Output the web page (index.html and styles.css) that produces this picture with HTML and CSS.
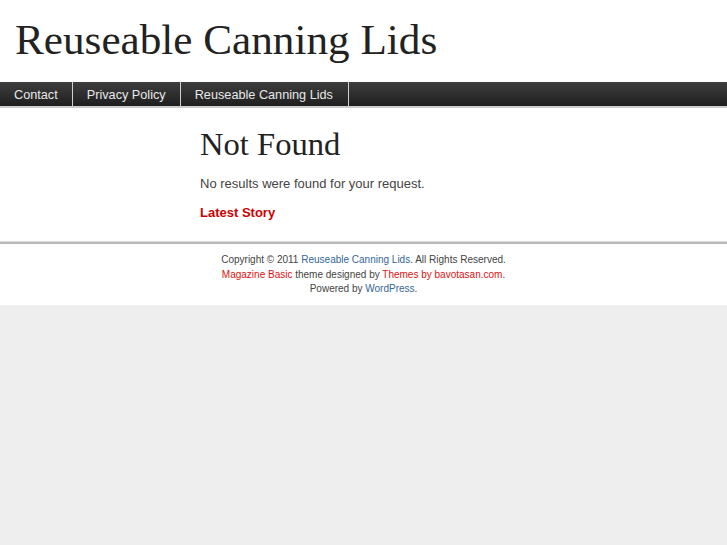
FILE: index.html
```html
<!DOCTYPE html>
<html>
<head>
<meta charset="utf-8">
<title>Reuseable Canning Lids</title>
<link rel="stylesheet" href="styles.css">
</head>
<body>
<div class="page">
  <header class="header">
    <h1 class="site-title">Reuseable Canning Lids</h1>
  </header>
  <nav class="nav">
    <ul class="menu">
      <li><a href="#">Contact</a></li>
      <li><a href="#">Privacy Policy</a></li>
      <li><a href="#">Reuseable Canning Lids</a></li>
    </ul>
  </nav>
  <div class="content">
    <aside class="sidebar"></aside>
    <main class="main">
      <h2 class="title">Not Found</h2>
      <p class="message">No results were found for your request.</p>
      <h3 class="latest">Latest Story</h3>
    </main>
  </div>
  <footer class="footer">
    <p>Copyright © 2011 <a class="blue" href="#">Reuseable Canning Lids</a>. All Rights Reserved.</p>
    <p><a class="red" href="#">Magazine Basic</a> theme designed by <a class="red" href="#">Themes by bavotasan.com</a>.</p>
    <p>Powered by <a class="blue" href="#">WordPress</a>.</p>
  </footer>
</div>
</body>
</html>
```
FILE: styles.css
```css
html, body {
  margin: 0;
  padding: 0;
}
body {
  background: #eeeeee;
  font-family: "Liberation Sans", Arial, sans-serif;
}
.page {
  background: #ffffff;
}
.header {
  height: 82px;
  display: flex;
  align-items: center;
  padding-left: 15px;
}
.site-title {
  margin: 0;
  font-family: "Liberation Serif", "Times New Roman", serif;
  font-weight: normal;
  font-size: 43.2px;
  color: #222222;
  line-height: 1;
  padding-bottom: 2px;
}
.nav {
  background: linear-gradient(#3e3e3e, #1f1f1f);
  border-bottom: 2px solid #cccccc;
  height: 24px;
}
.menu {
  margin: 0;
  padding: 0;
  list-style: none;
  display: flex;
  height: 100%;
}
.menu li {
  border-right: 1px solid #d0d0d0;
  display: flex;
  align-items: center;
}
.menu li:nth-child(3) a {
  padding-right: 15px;
}
.menu a {
  display: block;
  padding: 1px 14px 0 14px;
  color: #e8e8e8;
  text-decoration: none;
  font-size: 12.7px;
  line-height: 26px;
}
.content {
  display: flex;
  border-bottom: 1px solid #dcdcdc;
  height: 133px;
}
.sidebar {
  width: 200px;
  flex: none;
}
.main {
  flex: 1;
}
.title {
  margin: 18px 0 0;
  font-family: "Liberation Serif", "Times New Roman", serif;
  font-weight: normal;
  font-size: 32.6px;
  line-height: 36px;
  color: #222222;
}
.message {
  margin: 13px 0 0;
  font-size: 13px;
  line-height: 18px;
  color: #444444;
}
.latest {
  margin: 11px 0 0;
  font-size: 13px;
  font-weight: bold;
  line-height: 18px;
  color: #cc0000;
}
.footer {
  border-top: 2px solid #b9b9b9;
  padding: 9px 0 8px;
  text-align: center;
  font-size: 10px;
  line-height: 14.5px;
  color: #444444;
}
.footer p {
  margin: 0;
}
.footer a {
  text-decoration: none;
}
.footer .blue {
  color: #336699;
}
.footer .red {
  color: #dd1111;
}
```
